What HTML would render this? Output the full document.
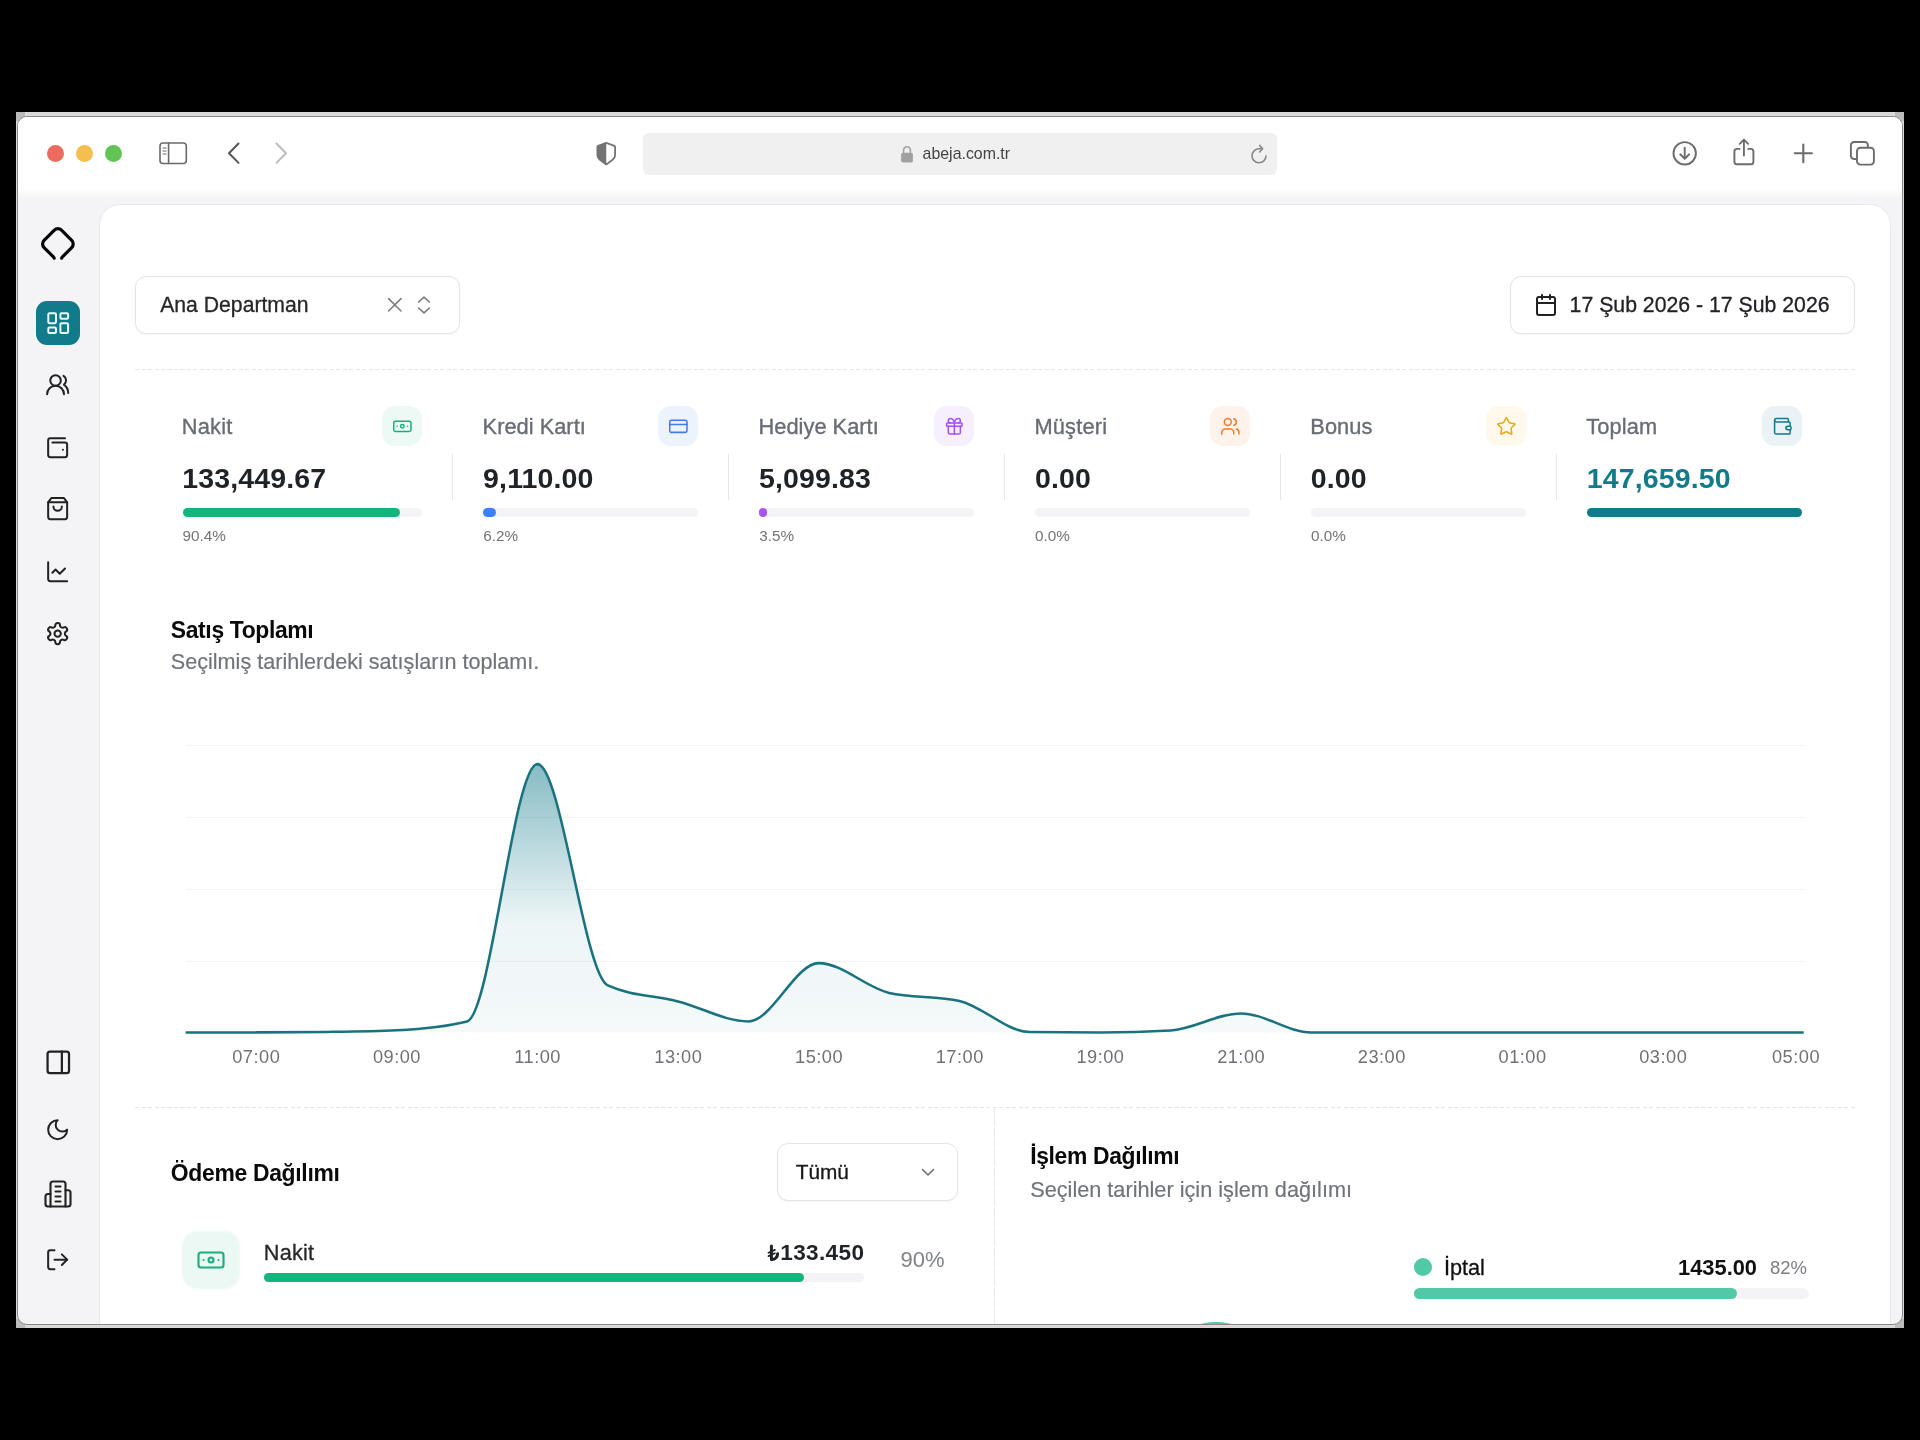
<!DOCTYPE html>
<html lang="tr"><head><meta charset="utf-8"><title>abeja</title>
<style>
*{box-sizing:border-box;margin:0;padding:0}
html,body{width:1920px;height:1440px;background:#000;overflow:hidden}
body{position:relative;font-family:"Liberation Sans",sans-serif;color:#1f2227}
.a{position:absolute}
.t{position:absolute;white-space:nowrap;line-height:1}
svg{position:absolute;overflow:visible}
.frame{position:absolute;left:16px;top:112px;width:1888px;height:1216px;background:#d9d9d9}
.cq{position:absolute;width:9px;height:9px;background:#bbbbbb}
.win{position:absolute;left:17px;top:116px;width:1886px;height:1209px;border:1px solid #8b8b8b;border-radius:10px;overflow:hidden;background:#f4f4f6}
.pg{position:absolute;left:-18px;top:-117px;width:1920px;height:1440px;will-change:transform}
.ic{fill:none;stroke-linecap:round;stroke-linejoin:round}

</style></head>
<body>
<div class="frame"></div>
<div class="cq" style="left:16px;top:112px"></div>
<div class="cq" style="left:1895px;top:112px"></div>
<div class="cq" style="left:16px;top:1319px"></div>
<div class="cq" style="left:1895px;top:1319px"></div>
<div class="win"><div class="pg">
<div class="a" style="left:0;top:110px;width:1920px;height:79px;background:#fff"></div>
<div class="a" style="left:0;top:189px;width:1920px;height:9px;background:linear-gradient(#fff,#f4f4f6)"></div>
<div class="a" style="left:47px;top:145px;width:17px;height:17px;border-radius:50%;background:#ed6a5e"></div>
<div class="a" style="left:76px;top:145px;width:17px;height:17px;border-radius:50%;background:#f5bf4f"></div>
<div class="a" style="left:105px;top:145px;width:17px;height:17px;border-radius:50%;background:#61c554"></div>
<svg class="ic" style="left:159px;top:142px" width="29" height="23" viewBox="0 0 29 23" stroke="#6a6a6a" stroke-width="1.6"><rect x="1" y="1" width="26.3" height="20.5" rx="3"/><path d="M9.6 1v20.5"/><path d="M4 6h3M4 9h3M4 12h3" stroke-width="1.2"/></svg>
<svg class="ic" style="left:226px;top:141px" width="16" height="24" viewBox="0 0 16 24" stroke="#555" stroke-width="2"><path d="M12.5 2.5L3 12.2l9.5 9.7"/></svg>
<svg class="ic" style="left:273px;top:141px" width="16" height="24" viewBox="0 0 16 24" stroke="#bdbdbd" stroke-width="2"><path d="M3.5 2.5L13 12.2 3.5 21.9"/></svg>
<svg style="left:596px;top:141.4px" width="21" height="26" viewBox="0 0 21 26"><path d="M10.25 1.9L18.4 4.8Q19.1 5.1 19.1 5.9V14Q19.1 16.8 16.6 18.8L10.25 23.4L3.9 18.8Q1.4 16.8 1.4 14V5.9Q1.4 5.1 2.1 4.8Z" fill="#fff" stroke="#737373" stroke-width="1.8" stroke-linejoin="round"/><path d="M10.25 1.9L2.1 4.8Q1.4 5.1 1.4 5.9V14Q1.4 16.8 3.9 18.8L10.25 23.4Z" fill="#737373"/></svg>
<div class="a" style="left:643px;top:133px;width:634px;height:42px;border-radius:6px;background:#f0f0f0"></div>
<svg style="left:900px;top:145px" width="14" height="18" viewBox="0 0 14 18"><rect x="1.1" y="7.7" width="11.8" height="9.8" rx="1.8" fill="#a0a0a0"/><path d="M3.6 8V5.2a3.4 3.4 0 016.8 0V8" fill="none" stroke="#a0a0a0" stroke-width="1.6"/></svg>
<div class="t" id="url" style="left:922.6px;top:146.4px;font-size:15.9px;color:#444">abeja.com.tr</div>
<svg class="ic" style="left:1250px;top:144px" width="18" height="20" viewBox="0 0 18 20" stroke="#888" stroke-width="1.6"><path d="M16 12a7 7 0 11-7-7.2h3.2"/><path d="M9.6 1.4l3 3.4-3 3.2"/></svg>
<svg class="ic" style="left:0;top:0" width="1920" height="200" viewBox="0 0 1920 200" stroke="#6c6c6c" stroke-width="1.9"><circle cx="1684.7" cy="153.3" r="11.2"/><path d="M1684.7 147.6v10.8M1680.2 154.3l4.5 4.4 4.5-4.4"/><path d="M1739.6 148.9h-2.6a2.6 2.6 0 00-2.6 2.6v10.2a2.6 2.6 0 002.6 2.6h13.8a2.6 2.6 0 002.6-2.6v-10.2a2.6 2.6 0 00-2.6-2.6h-2.6"/><path d="M1743.9 155.6v-15.2M1739.7 143.9l4.2-4.2 4.2 4.2"/><path d="M1803.3 144.5v17.8M1794.7 153.3h17.2" stroke-width="2.1"/><path d="M1855.8 159h-1.6a3.3 3.3 0 01-3.3-3.3v-10.4a3.3 3.3 0 013.3-3.3h10.4a3.3 3.3 0 013.3 3.3v1.4"/><rect x="1857" y="147.7" width="16.9" height="16.9" rx="3.3"/></svg>
<svg class="ic" style="left:0;top:0" width="120" height="300" viewBox="0 0 120 300" stroke="#050505" stroke-width="3.2"><path d="M61.7 258.2Q62.1 257.2 62.9 256.4L71.73 247.54A5 5 0 0 0 71.73 240.46L61.44 230.17A5 5 0 0 0 54.36 230.17L44.07 240.46A5 5 0 0 0 44.07 247.54L52.9 256.4Q53.7 257.2 54.1 258.2"/></svg>
<div class="a" style="left:36px;top:301px;width:44px;height:44px;border-radius:11px;background:#117a8b"></div>
<svg class="ic" style="left:44.5px;top:309.6px" width="26.4" height="26.4" viewBox="0 0 24 24" stroke="#e6fafc" stroke-width="1.8"><rect width="7" height="9" x="3" y="3" rx="1"/><rect width="7" height="5" x="14" y="3" rx="1"/><rect width="7" height="9" x="14" y="12" rx="1"/><rect width="7" height="5" x="3" y="16" rx="1"/></svg>
<svg class="ic" style="left:45.35px;top:372.15px" width="25.3" height="25.3" viewBox="0 0 24 24" stroke="#222" stroke-width="1.9"><path d="M18 21a8 8 0 0 0-16 0"/><circle cx="10" cy="8" r="5"/><path d="M22 20c0-3.37-2-6.5-4-8a5 5 0 0 0-.45-8.3"/></svg>
<svg class="ic" style="left:45.35px;top:434.55px" width="25.3" height="25.3" viewBox="0 0 24 24" stroke="#222" stroke-width="1.9"><path d="M17 14h.01"/><path d="M7 7h12a2 2 0 0 1 2 2v10a2 2 0 0 1-2 2H5a2 2 0 0 1-2-2V5a2 2 0 0 1 2-2h14"/></svg>
<svg class="ic" style="left:45.35px;top:496.35px" width="25.3" height="25.3" viewBox="0 0 24 24" stroke="#222" stroke-width="1.9"><path d="M6 2 3 6v14a2 2 0 0 0 2 2h14a2 2 0 0 0 2-2V6l-3-4Z"/><path d="M3 6h18"/><path d="M16 10a4 4 0 0 1-8 0"/></svg>
<svg class="ic" style="left:45.35px;top:558.55px" width="25.3" height="25.3" viewBox="0 0 24 24" stroke="#222" stroke-width="1.9"><path d="M3 3v16a2 2 0 0 0 2 2h16"/><path d="m19 9-5 5-4-4-3 3"/></svg>
<svg class="ic" style="left:45.35px;top:620.55px" width="25.3" height="25.3" viewBox="0 0 24 24" stroke="#222" stroke-width="1.9"><path d="M12.22 2h-.44a2 2 0 0 0-2 2v.18a2 2 0 0 1-1 1.73l-.43.25a2 2 0 0 1-2 0l-.15-.08a2 2 0 0 0-2.73.73l-.22.38a2 2 0 0 0 .73 2.73l.15.1a2 2 0 0 1 1 1.72v.51a2 2 0 0 1-1 1.74l-.15.09a2 2 0 0 0-.73 2.73l.22.38a2 2 0 0 0 2.73.73l.15-.08a2 2 0 0 1 2 0l.43.25a2 2 0 0 1 1 1.73V20a2 2 0 0 0 2 2h.44a2 2 0 0 0 2-2v-.18a2 2 0 0 1 1-1.73l.43-.25a2 2 0 0 1 2 0l.15.08a2 2 0 0 0 2.73-.73l.22-.39a2 2 0 0 0-.73-2.73l-.15-.08a2 2 0 0 1-1-1.74v-.5a2 2 0 0 1 1-1.74l.15-.09a2 2 0 0 0 .73-2.73l-.22-.38a2 2 0 0 0-2.73-.73l-.15.08a2 2 0 0 1-2 0l-.43-.25a2 2 0 0 1-1-1.73V4a2 2 0 0 0-2-2z"/><circle cx="12" cy="12" r="3"/></svg>
<svg class="ic" style="left:43.8px;top:1048.3px" width="28.6" height="28.6" viewBox="0 0 24 24" stroke="#222" stroke-width="1.9"><rect width="18" height="18" x="3" y="3" rx="2"/><path d="M15 3v18"/></svg>
<svg class="ic" style="left:45.35px;top:1116.65px" width="25.3" height="25.3" viewBox="0 0 24 24" stroke="#222" stroke-width="1.9"><path d="M12 3a6 6 0 0 0 9 9 9 9 0 1 1-9-9Z"/></svg>
<svg class="ic" style="left:43px;top:1179.3px" width="30" height="30" viewBox="0 0 24 24" stroke="#222" stroke-width="1.7"><path d="M6 22V4a2 2 0 0 1 2-2h8a2 2 0 0 1 2 2v18Z"/><path d="M6 12H4a2 2 0 0 0-2 2v6a2 2 0 0 0 2 2h2"/><path d="M18 9h2a2 2 0 0 1 2 2v9a2 2 0 0 1-2 2h-2"/><path d="M10 6h4"/><path d="M10 10h4"/><path d="M10 14h4"/><path d="M10 18h4"/></svg>
<svg class="ic" style="left:45.35px;top:1246.85px" width="25.3" height="25.3" viewBox="0 0 24 24" stroke="#222" stroke-width="1.9"><path d="M9 21H5a2 2 0 0 1-2-2V5a2 2 0 0 1 2-2h4"/><polyline points="16 17 21 12 16 7"/><line x1="21" x2="9" y1="12" y2="12"/></svg>
<div class="a" id="panel" style="left:99px;top:204px;width:1792px;height:1200px;border:1px solid #e8e8eb;border-radius:21px;background:#fff"></div>
<div class="a" style="left:135px;top:276px;width:325px;height:58px;border:1px solid #e4e4e7;border-radius:11px;background:#fff;box-shadow:0 1px 2px rgba(0,0,0,.04)"></div>
<div class="t" style="left:160.20px;top:294.45px;font-size:21.20px;color:#27272a;-webkit-text-stroke:0.30px #27272a;">Ana Departman</div>
<svg class="ic" style="left:387px;top:297px" width="16" height="16" viewBox="0 0 16 16" stroke="#7a7a80" stroke-width="1.5"><path d="M1.6 1.6l12.4 12.4M14 1.6L1.6 14"/></svg>
<svg class="ic" style="left:416px;top:295px" width="16" height="20" viewBox="0 0 16 20" stroke="#7a7a80" stroke-width="1.6"><path d="M2.6 7L8 2.2 13.4 7M2.6 13L8 17.8 13.4 13"/></svg>
<div class="a" style="left:1510px;top:276px;width:345px;height:58px;border:1px solid #e4e4e7;border-radius:11px;background:#fff;box-shadow:0 1px 2px rgba(0,0,0,.04)"></div>
<svg class="ic" style="left:1534.2px;top:292.8px" width="24" height="24" viewBox="0 0 24 24" stroke="#222" stroke-width="2"><path d="M8 2v4"/><path d="M16 2v4"/><rect width="18" height="18" x="3" y="4" rx="2"/><path d="M3 10h18"/></svg>
<div class="t" style="left:1569.60px;top:294.91px;font-size:21.25px;color:#222226;-webkit-text-stroke:0.30px #222226;">17 Şub 2026 - 17 Şub 2026</div>
<div class="a" style="left:135px;top:369px;width:1720px;height:1px;background:repeating-linear-gradient(90deg,#e6e6e9 0 4px,transparent 4px 6.5px)"></div>
<div class="t" style="left:181.80px;top:415.74px;font-size:21.80px;color:#686c74;letter-spacing:0.22px;-webkit-text-stroke:0.35px #686c74;">Nakit</div>
<div class="a" style="left:382.3px;top:406px;width:40px;height:40px;border-radius:12.5px;background:#edf9f4;filter:blur(0.7px)"></div>
<svg class="ic" style="left:392.20px;top:415.65px" width="20.7" height="20.7" viewBox="0 0 24 24" stroke="#1aae7a" stroke-width="1.75"><rect width="20" height="12" x="2" y="6" rx="2"/><circle cx="12" cy="12" r="2"/><path d="M6 12h.01M18 12h.01"/></svg>
<div class="t" style="left:182.30px;top:463.87px;font-size:28.50px;font-weight:700;color:#1f2227;letter-spacing:0.14px;">133,449.67</div>
<div class="a" style="left:182.5px;top:508px;width:239.8px;height:8.5px;border-radius:5px;background:#f4f4f6"></div>
<div class="a" style="left:182.5px;top:508px;width:217.5px;height:8.5px;border-radius:5px;background:#14b57d"></div>
<div class="t" style="left:182.50px;top:528.15px;font-size:15.30px;color:#737378;">90.4%</div>
<div class="a" style="left:452.0px;top:454px;width:1px;height:46px;background:#e5e7eb"></div>
<div class="t" style="left:482.60px;top:415.74px;font-size:21.80px;color:#686c74;letter-spacing:0.02px;-webkit-text-stroke:0.35px #686c74;">Kredi Kartı</div>
<div class="a" style="left:658.2px;top:406px;width:40px;height:40px;border-radius:12.5px;background:#edf3fd;filter:blur(0.7px)"></div>
<svg class="ic" style="left:668.10px;top:415.65px" width="20.7" height="20.7" viewBox="0 0 24 24" stroke="#3d7be6" stroke-width="1.75"><rect width="20" height="14" x="2" y="5" rx="2"/><line x1="2" x2="22" y1="10" y2="10"/></svg>
<div class="t" style="left:483.10px;top:463.87px;font-size:28.50px;font-weight:700;color:#1f2227;letter-spacing:0.14px;">9,110.00</div>
<div class="a" style="left:483.3px;top:508px;width:214.9px;height:8.5px;border-radius:5px;background:#f4f4f6"></div>
<div class="a" style="left:483.3px;top:508px;width:13.0px;height:8.5px;border-radius:5px;background:#3b82f6"></div>
<div class="t" style="left:483.30px;top:528.15px;font-size:15.30px;color:#737378;">6.2%</div>
<div class="a" style="left:727.9px;top:454px;width:1px;height:46px;background:#e5e7eb"></div>
<div class="t" style="left:758.50px;top:415.74px;font-size:21.80px;color:#686c74;letter-spacing:0.03px;-webkit-text-stroke:0.35px #686c74;">Hediye Kartı</div>
<div class="a" style="left:934.1px;top:406px;width:40px;height:40px;border-radius:12.5px;background:#f6effe;filter:blur(0.7px)"></div>
<svg class="ic" style="left:944.00px;top:415.65px" width="20.7" height="20.7" viewBox="0 0 24 24" stroke="#a64ff0" stroke-width="1.75"><rect x="3" y="8" width="18" height="4" rx="1"/><path d="M12 8v13"/><path d="M19 12v7a2 2 0 0 1-2 2H7a2 2 0 0 1-2-2v-7"/><path d="M7.5 8a2.5 2.5 0 0 1 0-5A4.8 8 0 0 1 12 8a4.8 8 0 0 1 4.5-5 2.5 2.5 0 0 1 0 5"/></svg>
<div class="t" style="left:759.00px;top:463.87px;font-size:28.50px;font-weight:700;color:#1f2227;letter-spacing:0.14px;">5,099.83</div>
<div class="a" style="left:759.2px;top:508px;width:214.9px;height:8.5px;border-radius:5px;background:#f4f4f6"></div>
<div class="a" style="left:759.2px;top:508px;width:8.0px;height:8.5px;border-radius:5px;background:#a855f7"></div>
<div class="t" style="left:759.20px;top:528.15px;font-size:15.30px;color:#737378;">3.5%</div>
<div class="a" style="left:1003.8px;top:454px;width:1px;height:46px;background:#e5e7eb"></div>
<div class="t" style="left:1034.40px;top:415.74px;font-size:21.80px;color:#686c74;letter-spacing:0.22px;-webkit-text-stroke:0.35px #686c74;">Müşteri</div>
<div class="a" style="left:1210.0px;top:406px;width:40px;height:40px;border-radius:12.5px;background:#fef2ea;filter:blur(0.7px)"></div>
<svg class="ic" style="left:1219.90px;top:415.65px" width="20.7" height="20.7" viewBox="0 0 24 24" stroke="#f07b2c" stroke-width="1.75"><path d="M16 21v-2a4 4 0 0 0-4-4H6a4 4 0 0 0-4 4v2"/><circle cx="9" cy="7" r="4"/><path d="M22 21v-2a4 4 0 0 0-3-3.87"/><path d="M16 3.13a4 4 0 0 1 0 7.75"/></svg>
<div class="t" style="left:1034.90px;top:463.87px;font-size:28.50px;font-weight:700;color:#1f2227;letter-spacing:0.14px;">0.00</div>
<div class="a" style="left:1035.1px;top:508px;width:214.9px;height:8.5px;border-radius:5px;background:#f4f4f6"></div>
<div class="t" style="left:1035.10px;top:528.15px;font-size:15.30px;color:#737378;">0.0%</div>
<div class="a" style="left:1279.7px;top:454px;width:1px;height:46px;background:#e5e7eb"></div>
<div class="t" style="left:1310.30px;top:415.74px;font-size:21.80px;color:#686c74;letter-spacing:0.07px;-webkit-text-stroke:0.35px #686c74;">Bonus</div>
<div class="a" style="left:1485.9px;top:406px;width:40px;height:40px;border-radius:12.5px;background:#fef9ea;filter:blur(0.7px)"></div>
<svg class="ic" style="left:1495.80px;top:415.65px" width="20.7" height="20.7" viewBox="0 0 24 24" stroke="#e6a813" stroke-width="1.75"><path d="M11.525 2.295a.53.53 0 0 1 .95 0l2.31 4.679a2.123 2.123 0 0 0 1.595 1.16l5.166.756a.53.53 0 0 1 .294.904l-3.736 3.638a2.123 2.123 0 0 0-.611 1.878l.882 5.14a.53.53 0 0 1-.771.56l-4.618-2.428a2.122 2.122 0 0 0-1.973 0L6.396 21.01a.53.53 0 0 1-.77-.56l.881-5.139a2.122 2.122 0 0 0-.611-1.879L2.16 9.795a.53.53 0 0 1 .294-.906l5.165-.755a2.122 2.122 0 0 0 1.597-1.16z"/></svg>
<div class="t" style="left:1310.80px;top:463.87px;font-size:28.50px;font-weight:700;color:#1f2227;letter-spacing:0.14px;">0.00</div>
<div class="a" style="left:1311.0px;top:508px;width:214.9px;height:8.5px;border-radius:5px;background:#f4f4f6"></div>
<div class="t" style="left:1311.00px;top:528.15px;font-size:15.30px;color:#737378;">0.0%</div>
<div class="a" style="left:1555.6px;top:454px;width:1px;height:46px;background:#e5e7eb"></div>
<div class="t" style="left:1586.20px;top:415.74px;font-size:21.80px;color:#686c74;letter-spacing:0.16px;-webkit-text-stroke:0.35px #686c74;">Toplam</div>
<div class="a" style="left:1761.8px;top:406px;width:40px;height:40px;border-radius:12.5px;background:#e9f2f4;filter:blur(0.7px)"></div>
<svg class="ic" style="left:1771.70px;top:415.65px" width="20.7" height="20.7" viewBox="0 0 24 24" stroke="#117a8b" stroke-width="1.75"><path d="M17 14h.01"/><path d="M19 7V4a1 1 0 0 0-1-1H5a2 2 0 0 0 0 4h15a1 1 0 0 1 1 1v4h-3a2 2 0 0 0 0 4h3a1 1 0 0 0 1-1v-2a1 1 0 0 0-1-1"/><path d="M3 5v14a2 2 0 0 0 2 2h15a1 1 0 0 0 1-1v-4"/></svg>
<div class="t" style="left:1586.70px;top:463.87px;font-size:28.50px;font-weight:700;color:#117a8b;letter-spacing:0.14px;">147,659.50</div>
<div class="a" style="left:1586.9px;top:508px;width:214.9px;height:8.5px;border-radius:5px;background:#f4f4f6"></div>
<div class="a" style="left:1586.9px;top:508px;width:214.9px;height:8.5px;border-radius:5px;background:#117a8b"></div>
<div class="t" style="left:170.80px;top:618.91px;font-size:22.90px;font-weight:700;color:#09090b;letter-spacing:-0.35px;transform-origin:0 84.67%;transform:scaleY(1.075);">Satış Toplamı</div>
<div class="t" style="left:170.80px;top:650.91px;font-size:21.60px;color:#70747b;-webkit-text-stroke:0.18px #70747b;">Seçilmiş tarihlerdeki satışların toplamı.</div>
<div class="a" style="left:186px;top:745.1px;width:1618px;height:1px;background:#f4f4f6"></div>
<div class="a" style="left:186px;top:817.0px;width:1618px;height:1px;background:#f4f4f6"></div>
<div class="a" style="left:186px;top:888.8px;width:1618px;height:1px;background:#f4f4f6"></div>
<div class="a" style="left:186px;top:960.5px;width:1618px;height:1px;background:#f4f4f6"></div>
<svg style="left:0;top:0" width="1920" height="1440" viewBox="0 0 1920 1440"><defs><linearGradient id="g" x1="0" y1="745" x2="0" y2="1032" gradientUnits="userSpaceOnUse"><stop offset="0" stop-color="#117a8b" stop-opacity="0.56"/><stop offset="0.62" stop-color="#117a8b" stop-opacity="0.075"/><stop offset="1" stop-color="#117a8b" stop-opacity="0.045"/></linearGradient></defs><path d="M185.65,1032.40C209.10,1032.40,232.55,1032.40,256.00,1032.40C279.45,1032.40,302.90,1032.23,326.35,1031.90C349.80,1031.57,373.25,1031.33,396.70,1030.20C420.15,1029.07,443.60,1027.27,467.05,1021.40C490.50,1015.53,513.95,764.10,537.40,764.10C560.85,764.10,584.30,974.73,607.75,985.40C631.20,996.07,654.65,995.40,678.10,1001.40C701.55,1007.40,725.00,1021.40,748.45,1021.40C771.90,1021.40,795.35,963.10,818.80,963.10C842.25,963.10,865.70,987.57,889.15,992.90C912.60,998.23,936.05,995.57,959.50,1000.90C982.95,1006.23,1006.40,1031.90,1029.85,1032.10C1053.30,1032.30,1076.75,1032.40,1100.20,1032.40C1123.65,1032.40,1147.10,1031.73,1170.55,1030.40C1194.00,1029.07,1217.45,1013.40,1240.90,1013.40C1264.35,1013.40,1287.80,1032.40,1311.25,1032.40C1334.70,1032.40,1358.15,1032.40,1381.60,1032.40C1405.05,1032.40,1428.50,1032.40,1451.95,1032.40C1475.40,1032.40,1498.85,1032.40,1522.30,1032.40C1545.75,1032.40,1569.20,1032.40,1592.65,1032.40C1616.10,1032.40,1639.55,1032.40,1663.00,1032.40C1686.45,1032.40,1709.90,1032.40,1733.35,1032.40C1756.80,1032.40,1780.25,1032.40,1803.70,1032.40L1803.70,1032.40L185.65,1032.40Z" fill="url(#g)"/><path d="M185.65,1032.40C209.10,1032.40,232.55,1032.40,256.00,1032.40C279.45,1032.40,302.90,1032.23,326.35,1031.90C349.80,1031.57,373.25,1031.33,396.70,1030.20C420.15,1029.07,443.60,1027.27,467.05,1021.40C490.50,1015.53,513.95,764.10,537.40,764.10C560.85,764.10,584.30,974.73,607.75,985.40C631.20,996.07,654.65,995.40,678.10,1001.40C701.55,1007.40,725.00,1021.40,748.45,1021.40C771.90,1021.40,795.35,963.10,818.80,963.10C842.25,963.10,865.70,987.57,889.15,992.90C912.60,998.23,936.05,995.57,959.50,1000.90C982.95,1006.23,1006.40,1031.90,1029.85,1032.10C1053.30,1032.30,1076.75,1032.40,1100.20,1032.40C1123.65,1032.40,1147.10,1031.73,1170.55,1030.40C1194.00,1029.07,1217.45,1013.40,1240.90,1013.40C1264.35,1013.40,1287.80,1032.40,1311.25,1032.40C1334.70,1032.40,1358.15,1032.40,1381.60,1032.40C1405.05,1032.40,1428.50,1032.40,1451.95,1032.40C1475.40,1032.40,1498.85,1032.40,1522.30,1032.40C1545.75,1032.40,1569.20,1032.40,1592.65,1032.40C1616.10,1032.40,1639.55,1032.40,1663.00,1032.40C1686.45,1032.40,1709.90,1032.40,1733.35,1032.40C1756.80,1032.40,1780.25,1032.40,1803.70,1032.40" fill="none" stroke="#19727e" stroke-width="2.55" stroke-linecap="butt" stroke-linejoin="round"/></svg>
<div class="t" style="left:256.25px;transform:translateX(-50%);top:1047.99px;font-size:18.20px;color:#6f7177;letter-spacing:0.5px;">07:00</div>
<div class="t" style="left:396.95px;transform:translateX(-50%);top:1047.99px;font-size:18.20px;color:#6f7177;letter-spacing:0.5px;">09:00</div>
<div class="t" style="left:537.65px;transform:translateX(-50%);top:1047.99px;font-size:18.20px;color:#6f7177;letter-spacing:0.5px;">11:00</div>
<div class="t" style="left:678.35px;transform:translateX(-50%);top:1047.99px;font-size:18.20px;color:#6f7177;letter-spacing:0.5px;">13:00</div>
<div class="t" style="left:819.05px;transform:translateX(-50%);top:1047.99px;font-size:18.20px;color:#6f7177;letter-spacing:0.5px;">15:00</div>
<div class="t" style="left:959.75px;transform:translateX(-50%);top:1047.99px;font-size:18.20px;color:#6f7177;letter-spacing:0.5px;">17:00</div>
<div class="t" style="left:1100.45px;transform:translateX(-50%);top:1047.99px;font-size:18.20px;color:#6f7177;letter-spacing:0.5px;">19:00</div>
<div class="t" style="left:1241.15px;transform:translateX(-50%);top:1047.99px;font-size:18.20px;color:#6f7177;letter-spacing:0.5px;">21:00</div>
<div class="t" style="left:1381.85px;transform:translateX(-50%);top:1047.99px;font-size:18.20px;color:#6f7177;letter-spacing:0.5px;">23:00</div>
<div class="t" style="left:1522.55px;transform:translateX(-50%);top:1047.99px;font-size:18.20px;color:#6f7177;letter-spacing:0.5px;">01:00</div>
<div class="t" style="left:1663.25px;transform:translateX(-50%);top:1047.99px;font-size:18.20px;color:#6f7177;letter-spacing:0.5px;">03:00</div>
<div class="t" style="right:100.00px;top:1047.99px;font-size:18.20px;color:#6f7177;letter-spacing:0.5px;">05:00</div>
<div class="a" style="left:135px;top:1107px;width:1720px;height:1px;background:repeating-linear-gradient(90deg,#e6e6e9 0 4px,transparent 4px 6.5px)"></div>
<div class="a" style="left:994px;top:1108px;width:1px;height:240px;background:repeating-linear-gradient(180deg,#e9e9ec 0 8.6px,transparent 8.6px 10px)"></div>
<div class="t" style="left:170.80px;top:1162.41px;font-size:22.90px;font-weight:700;color:#09090b;letter-spacing:-0.3px;transform-origin:0 84.67%;transform:scaleY(1.075);">Ödeme Dağılımı</div>
<div class="a" style="left:777px;top:1143px;width:181px;height:58px;border:1px solid #e4e4e7;border-radius:11px;background:#fff;box-shadow:0 1px 2px rgba(0,0,0,.04)"></div>
<div class="t" style="left:795.70px;top:1161.89px;font-size:20.80px;color:#18181b;-webkit-text-stroke:0.32px #18181b;">Tümü</div>
<svg class="ic" style="left:920px;top:1164px" width="16" height="16" viewBox="0 0 16 16" stroke="#6b6b70" stroke-width="1.6"><path d="M2.5 5.5L8 11l5.5-5.5"/></svg>
<div class="a" style="left:182px;top:1231px;width:58px;height:58px;border-radius:15px;background:#ecf8f3;filter:blur(0.8px)"></div>
<svg class="ic" style="left:196px;top:1245px" width="30" height="30" viewBox="0 0 24 24" stroke="#1aae7a" stroke-width="1.7"><rect width="20" height="12" x="2" y="6" rx="2"/><circle cx="12" cy="12" r="2"/><path d="M6 12h.01M18 12h.01"/></svg>
<div class="t" style="left:263.80px;top:1242.43px;font-size:21.70px;color:#27272a;letter-spacing:0.2px;-webkit-text-stroke:0.30px #27272a;">Nakit</div>
<div class="t" style="right:1055.70px;top:1242.36px;font-size:22.60px;font-weight:700;color:#1f2227;letter-spacing:0.33px;">133.450</div>
<svg class="ic" style="left:768.1px;top:1245.6px" width="12" height="16" viewBox="0 0 12 16" stroke="#1f2227" stroke-linecap="butt"><path d="M3.4 0.1V13.5H4A5.6 5.6 0 0 0 9.6 7.7" stroke-width="3"/><path d="M0.5 6.8L6.9 3.9M0.5 10.1L6.9 7.2" stroke-width="1.8"/></svg>
<div class="a" style="left:263.8px;top:1273px;width:600.7px;height:8.5px;border-radius:5px;background:#f4f4f6"></div>
<div class="a" style="left:263.8px;top:1273px;width:540.7px;height:8.5px;border-radius:5px;background:#14b57d"></div>
<div class="t" style="left:900.60px;top:1248.67px;font-size:22.00px;color:#7f8287;">90%</div>
<div class="t" style="left:1030.20px;top:1145.01px;font-size:22.90px;font-weight:700;color:#09090b;letter-spacing:-0.35px;transform-origin:0 84.67%;transform:scaleY(1.075);">İşlem Dağılımı</div>
<div class="t" style="left:1030.20px;top:1179.23px;font-size:21.70px;color:#70747b;-webkit-text-stroke:0.18px #70747b;">Seçilen tarihler için işlem dağılımı</div>
<div class="a" style="left:1413.5px;top:1257.5px;width:18.5px;height:18.5px;border-radius:50%;background:#52c9a6"></div>
<div class="t" style="left:1443.90px;top:1256.63px;font-size:21.70px;color:#111;-webkit-text-stroke:0.30px #111;">İptal</div>
<div class="t" style="right:163.00px;top:1256.50px;font-size:21.85px;font-weight:700;color:#111;">1435.00</div>
<div class="t" style="right:113.00px;top:1259.34px;font-size:18.50px;color:#7d7d82;">82%</div>
<div class="a" style="left:1413.8px;top:1287.5px;width:395px;height:11.5px;border-radius:6px;background:#f4f4f6"></div>
<div class="a" style="left:1413.8px;top:1287.5px;width:323.5px;height:11.5px;border-radius:6px;background:#52c9a6"></div>
<div class="a" style="left:1160px;top:1322.2px;width:112px;height:112px;border-radius:50%;border:14px solid #52c9a6"></div>

</div></div>
</body></html>
